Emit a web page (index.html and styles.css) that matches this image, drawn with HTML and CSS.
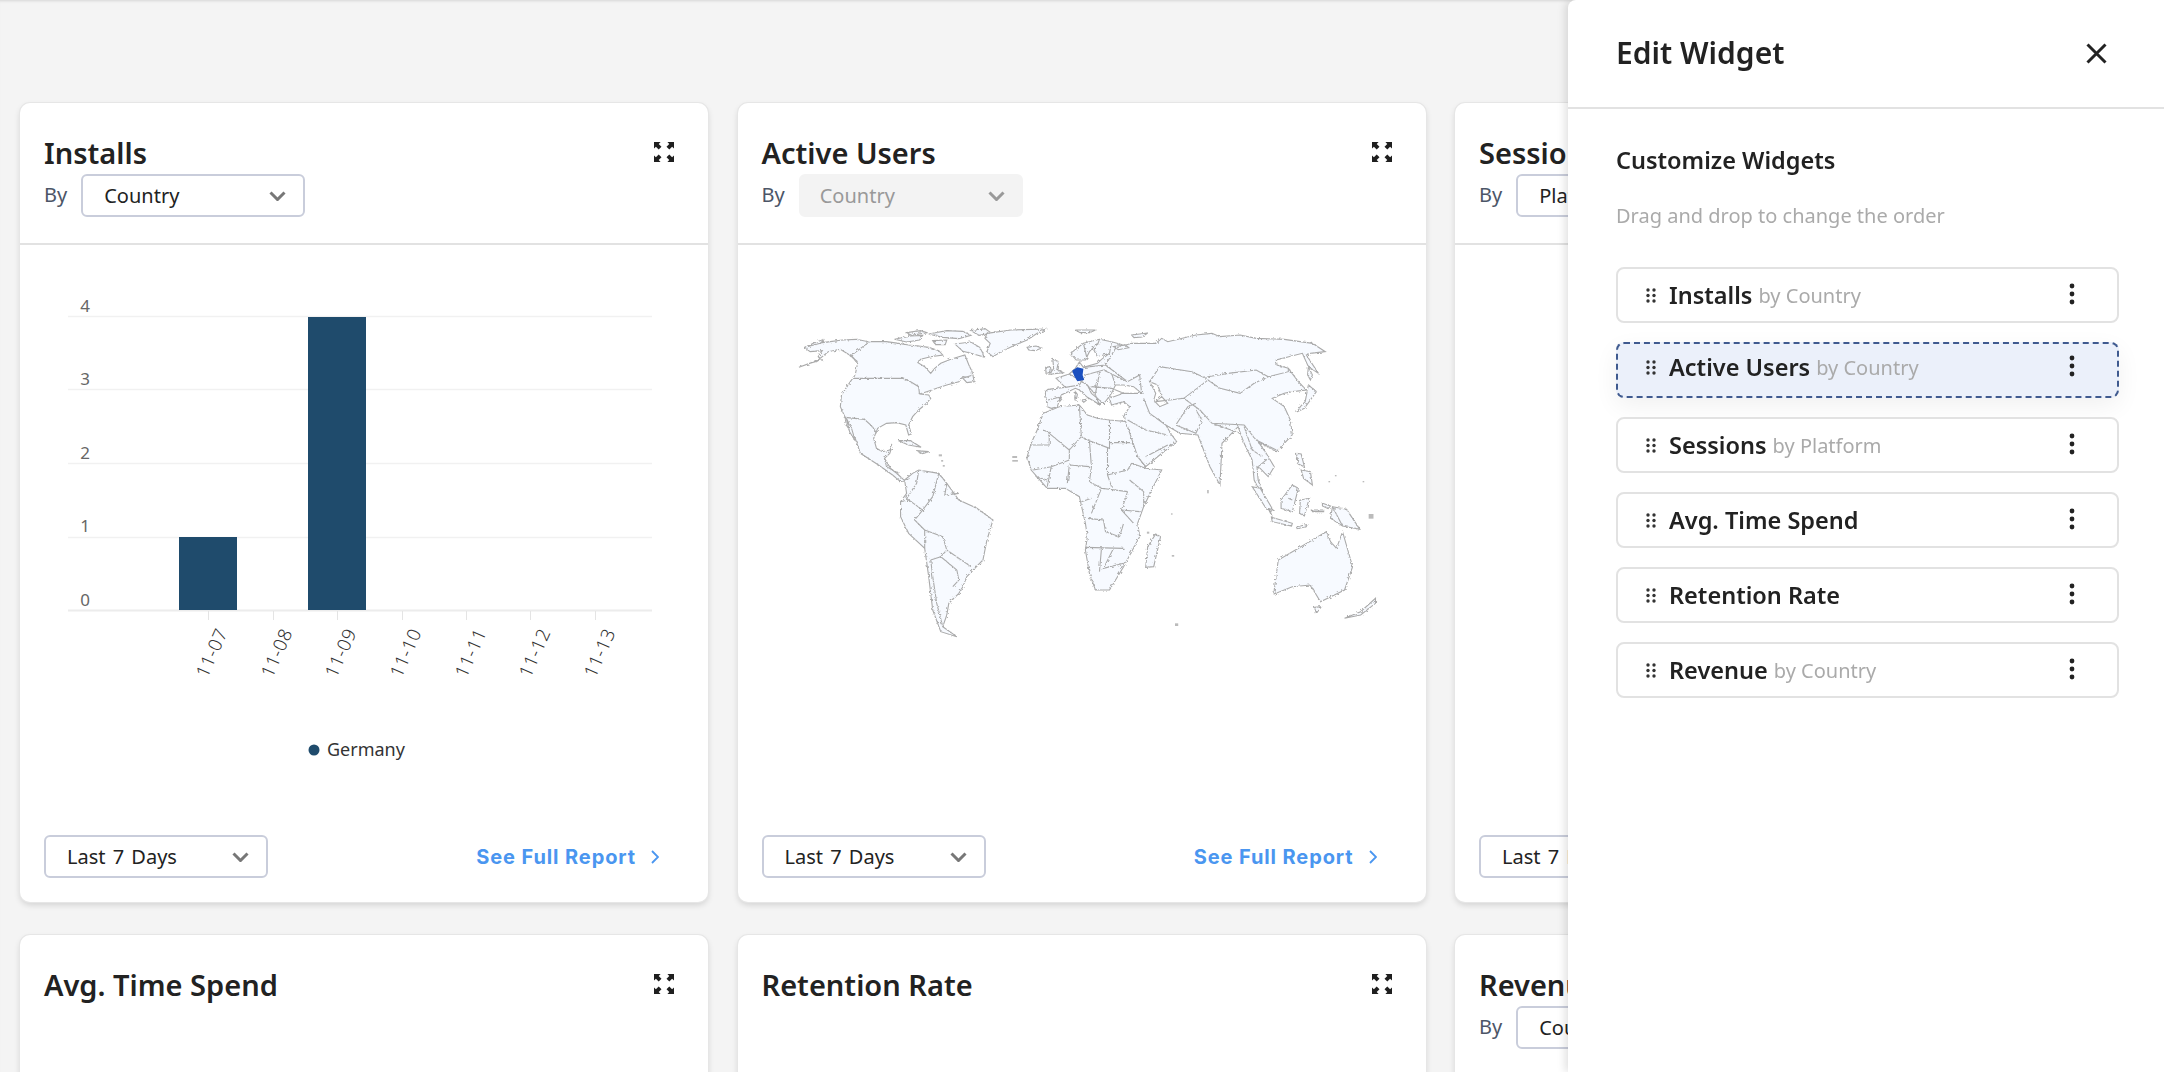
FILE: index.html
```html
<!DOCTYPE html>
<html lang="en">
<head>
    <meta charset="UTF-8">
    <title>Dashboard - Edit Widget</title>
    <link rel="stylesheet" href="styles.css">
</head>
<body>
    <svg class="sprite" aria-hidden="true">
        <symbol id="expand" viewBox="0 0 20 20">
            <path id="corner" d="M0 0h6.6L4.7 1.9 7.5 4.7 4.7 7.5 1.9 4.7 0 6.6Z"/>
            <use href="#corner" transform="matrix(-1 0 0 1 20 0)"/>
            <use href="#corner" transform="matrix(1 0 0 -1 0 20)"/>
            <use href="#corner" transform="matrix(-1 0 0 -1 20 20)"/>
        </symbol>
        <symbol id="chevron" viewBox="0 0 17 10">
            <path d="M1.5 1.5l7 7 7-7" fill="none" stroke="currentColor" stroke-width="3"/>
        </symbol>
        <symbol id="grip" viewBox="0 0 10 15">
            <circle cx="2" cy="2" r="1.7"/><circle cx="8" cy="2" r="1.7"/>
            <circle cx="2" cy="7.5" r="1.7"/><circle cx="8" cy="7.5" r="1.7"/>
            <circle cx="2" cy="13" r="1.7"/><circle cx="8" cy="13" r="1.7"/>
        </symbol>
        <symbol id="kebab" viewBox="0 0 6 22">
            <circle cx="3" cy="3" r="2.4"/><circle cx="3" cy="11" r="2.4"/><circle cx="3" cy="19" r="2.4"/>
        </symbol>
    </svg>

    <main class="grid">
        <!-- Installs -->
        <section class="card">
            <header class="card-head">
                <div class="title-row">
                    <h2>Installs</h2>
                    <svg class="expand"><use href="#expand"/></svg>
                </div>
                <div class="by-row">
                    <span class="by">By</span>
                    <div class="select"><span>Country</span><svg class="chev"><use href="#chevron"/></svg></div>
                </div>
            </header>
            <div class="card-body">
                <svg class="chart" viewBox="0 0 688 590" width="688" height="590">
                    <g class="grid-lines">
                        <path d="M48 71.5H632M48 144.5H632M48 218.5H632M48 292.5H632"/>
                        <path class="base" d="M48 365.5H632"/>
                    </g>
                    <path class="ticks" d="M188.5 366v9M253.5 366v9M317.5 366v9M382.5 366v9M446.5 366v9M510.5 366v9M575.5 366v9"/>
                    <rect class="bar" x="159" y="292" width="58" height="73"/>
                    <rect class="bar" x="288" y="72" width="58" height="293"/>
                    <g class="y-labels">
                        <text x="65" y="67">4</text>
                        <text x="65" y="140">3</text>
                        <text x="65" y="214">2</text>
                        <text x="65" y="287">1</text>
                        <text x="65" y="361">0</text>
                    </g>
                    <g class="x-labels">
                        <text transform="translate(208 387) rotate(-66)">11-07</text>
                        <text transform="translate(273 387) rotate(-66)">11-08</text>
                        <text transform="translate(337 387) rotate(-66)">11-09</text>
                        <text transform="translate(402 387) rotate(-66)">11-10</text>
                        <text transform="translate(467 387) rotate(-66)">11-11</text>
                        <text transform="translate(531 387) rotate(-66)">11-12</text>
                        <text transform="translate(596 387) rotate(-66)">11-13</text>
                    </g>
                    <circle class="legend-dot" cx="294" cy="505" r="5.5"/>
                    <text class="legend" x="307" y="511">Germany</text>
                </svg>
            </div>
            <footer class="card-foot">
                <div class="select wide"><span>Last 7 Days</span><svg class="chev"><use href="#chevron"/></svg></div>
                <a class="report">See Full Report <svg viewBox="0 0 8 14"><path d="M1 1l6 6-6 6" fill="none" stroke="currentColor" stroke-width="1.8"/></svg></a>
            </footer>
        </section>

        <!-- Active Users -->
        <section class="card">
            <header class="card-head">
                <div class="title-row">
                    <h2>Active Users</h2>
                    <svg class="expand"><use href="#expand"/></svg>
                </div>
                <div class="by-row">
                    <span class="by">By</span>
                    <div class="select disabled"><span>Country</span><svg class="chev"><use href="#chevron"/></svg></div>
                </div>
            </header>
            <div class="card-body">
                <svg class="map" viewBox="0 0 1568 1020" preserveAspectRatio="none" width="630" height="340">
                    <defs>
                        <filter id="rough" x="-2%" y="-2%" width="104%" height="104%">
                            <feTurbulence type="fractalNoise" baseFrequency="0.14" numOctaves="2" seed="4"/>
                            <feDisplacementMap in="SourceGraphic" scale="9"/>
                        </filter>
                    </defs>
                    <g filter="url(#rough)">
                        <g class="land">
                            <!-- north america -->
                            <path d="M72 172L100 160 128 150 120 140 130 122 100 125 85 112 115 100 150 95 180 90 215 88 245 95 290 95 320 100 345 105 370 108 395 112 420 122 430 135 400 140 375 148 368 158 385 170 400 190 410 175 425 160 450 148 470 140 485 135 495 165 503 185 505 205 480 200 470 215 440 225 415 235 390 245 372 252 395 255 400 265 385 285 370 300 355 320 345 345 352 372 345 375 338 345 315 338 290 340 268 355 258 385 265 415 280 425 298 420 305 405 298 430 285 445 300 475 320 495 335 512 325 515 305 495 270 465 225 430 212 385 190 345 187 322 175 290 178 255 200 215 212 195 218 160 205 140 175 118 145 125 120 150Z"/>
                            <path d="M190 325L203 355 212 392 198 365Z"/>
                            <path d="M310 88L350 78 380 76 372 90 340 96Z"/>
                            <path d="M395 72L440 62 480 64 500 76 470 86 430 82Z"/>
                            <path d="M460 102L500 96 522 112 535 142 500 130 480 124Z"/>
                            <path d="M340 68L375 62 392 68 352 76Z"/>
                            <path d="M500 62L535 56 552 70 520 76Z"/>
                            <path d="M405 92L440 90 436 104 412 104Z"/>
                            <path d="M480 205L505 195 508 215 490 218Z"/>
                            <path d="M540 70L600 60 690 57 665 70 640 90 610 105 575 125 555 140 540 125 548 100 535 85Z"/>
                            <path d="M640 112L662 108 676 114 660 122 644 120Z"/>
                            <path d="M320 392L350 392 376 412 345 405Z"/>
                            <path d="M364 422L395 425 380 431Z"/>
                            <path d="M88 112L110 98 135 88 125 100Z"/>
                            <!-- south america -->
                            <path d="M335 510L355 490 370 480 420 490 440 520 470 570 515 595 555 630 540 690 530 750 490 800 480 830 470 850 445 880 440 915 430 950 465 980 425 965 405 900 395 800 385 715 345 670 325 620 325 575 340 550Z"/>
                            <!-- africa -->
                            <path d="M650 400L665 360 680 310 720 290 770 285 790 315 815 325 845 330 890 335 905 400 935 475 975 480 950 540 930 590 915 640 920 680 880 770 845 840 810 840 795 790 785 720 790 680 785 640 770 560 735 535 690 535 650 480 640 440Z"/>
                            <path d="M960 672L972 680 955 770 935 772 940 710Z"/>
                            <!-- eurasia -->
                            <path d="M690 290L685 245 692 238 735 232 712 205 745 192 760 175 770 156 780 172 815 160 825 148 845 130 815 140 805 118 815 100 795 125 785 150 762 150 748 130 780 100 820 88 850 95 880 105 860 115 900 100 960 100 975 85 990 95 1060 75 1100 70 1120 80 1170 75 1210 85 1280 88 1350 100 1382 125 1345 130 1335 135 1365 190 1340 170 1325 130 1260 150 1262 165 1290 175 1315 215 1335 240 1300 245 1280 250 1250 265 1280 290 1295 330 1300 375 1260 425 1215 395 1235 430 1255 470 1240 500 1220 475 1212 470 1215 510 1250 620 1205 510 1200 450 1180 400 1165 350 1125 400 1120 525 1095 470 1065 375 1020 370 985 345 1000 375 1012 395 970 435 935 470 915 440 890 350 880 320 895 290 880 275 850 285 845 265 880 250 925 250 905 230 880 225 860 225 850 250 835 275 820 285 810 255 790 225 800 250 830 280 815 280 790 262 770 240 760 235 725 255 715 290 700 295Z"/>
                            <!-- islands asia pacific -->
                            <path d="M1310 430L1322 432 1330 470 1315 462Z"/>
                            <path d="M1322 480L1345 485 1350 525 1328 505Z"/>
                            <path d="M1200 530L1220 535 1252 600 1236 598Z"/>
                            <path d="M1272 570L1300 525 1315 535 1300 605 1272 595Z"/>
                            <path d="M1320 570L1342 565 1330 618 1318 610Z"/>
                            <path d="M1248 622L1300 640 1298 648 1250 635Z"/>
                            <path d="M1400 590L1435 598 1468 658 1425 648 1395 625Z"/>
                            <path d="M1350 600h28v5h-28zM1310 650l26-6v6l-24 6zM1375 580l20 8-6 8-14-8z"/>
                            <path d="M1312 305L1330 295 1360 245 1340 225 1332 275 1320 290Z"/>
                            <path d="M1340 170L1350 195 1345 210 1338 195Z"/>
                            <path d="M1255 840L1265 750 1315 715 1350 690 1385 665 1395 695 1410 715 1425 665 1450 770 1430 840 1370 875 1345 825 1300 830 1255 852Z"/>
                            <path d="M1355 892L1372 890 1360 910Z"/>
                            <path d="M1430 925L1470 905 1507 865 1507 880 1470 915Z"/>
                            <!-- europe islands -->
                            <path d="M704 148L718 155 714 178 730 188 695 193 706 176Z"/>
                            <path d="M686 172L698 170 700 186 687 190Z"/>
                            <path d="M760 245l5 8-3 18-4-2zM775 270l16-3-10 10zM720 265l6 2-4 6z"/>
                            <path d="M760 60h50l-14 8h-24zM855 110l30-5 8 8-26 6z"/>
                            <path d="M900 75l40-6-14 12-20 2z"/>
                            <!-- caspian -->
                            <path class="sea" d="M945 215L965 225 975 260 990 280 970 290 955 270 960 250Z"/>
                        </g>
                        <g class="borders">
                            <path d="M248 95L200 138 218 155M207 205L330 205 350 215 370 230 372 252M187 322L235 328 255 350 265 370M285 445L290 470 320 490"/>
                            <path d="M370 482L365 520 340 565 380 600 360 630 385 660 385 715M420 490L405 560 380 600M440 520L435 555 470 550M385 660L430 680 440 720 425 740 465 780 470 810 455 830M400 750L405 800 415 880 430 950M425 740L400 750M440 720L500 770M325 575L345 570"/>
                            <path d="M680 360L690 365 745 420 745 450M645 405L695 405 695 365M770 285L775 380 745 420M775 380L795 392 845 415 845 330M845 398L905 398M795 392L800 470 795 515M745 450L700 470 655 480M700 470L690 530M745 465L740 520M795 470L745 465M795 515L825 535 890 545M840 495L890 480 900 460M840 415L840 495 850 530M900 460L935 475M895 510L930 545 930 590M890 545L875 600 905 640M875 600L920 605M825 535L800 610M790 625L830 630 835 665 870 680M785 712L880 715M825 715L820 785M870 680L880 640M855 715L830 775 880 760M660 500L690 510M800 565L775 575"/>
                            <path d="M860 115L835 165 890 215 920 195 925 250M945 215L970 170 1050 185 1085 205 1090 200 1140 190 1210 180 1240 200 1205 220 1170 250 1120 235 1090 210 1085 215 1030 265 960 275 975 260M1240 200L1290 185 1290 175M1030 265L1070 300 1100 340 1180 345 1210 390 1260 420M930 265L945 310 985 345M1010 345L1040 290 1060 280M1010 345L1060 370 1075 330 1060 300M890 330L935 360 990 375M935 440L990 405M1100 340L1170 370M1180 350L1200 420 1225 440M1240 445L1215 470"/>
                            <path d="M745 192L790 225M785 195L830 180 890 215M780 172L835 165M800 230L850 235 880 250M820 190L810 250M850 190L860 225M735 232L770 225 785 195M692 270L720 262M780 100L790 150M820 88L815 105M850 95L845 130"/>
                            <path d="M1400 590L1425 648M1290 565L1300 570"/>
                        </g>
                    </g>
                    <path class="germany" d="M752 182L765 172 780 176 778 195 782 210 765 214 758 200Z"/>
                    <g class="specks">
                        <rect x="603" y="438" width="12" height="6"/><rect x="603" y="450" width="14" height="5"/>
                        <rect x="420" y="433" width="8" height="6"/><rect x="426" y="450" width="5" height="5"/><rect x="430" y="465" width="5" height="5"/>
                        <rect x="1088" y="540" width="4" height="10"/><rect x="998" y="610" width="4" height="4"/><rect x="1000" y="735" width="6" height="5"/>
                        <rect x="1008" y="940" width="8" height="8"/><rect x="1390" y="513" width="4" height="4"/><rect x="1406" y="495" width="4" height="4"/>
                        <rect x="1475" y="513" width="4" height="4"/><rect x="1490" y="612" width="12" height="14"/><rect x="938" y="665" width="6" height="6"/>
                    </g>
                </svg>
            </div>
            <footer class="card-foot">
                <div class="select wide"><span>Last 7 Days</span><svg class="chev"><use href="#chevron"/></svg></div>
                <a class="report">See Full Report <svg viewBox="0 0 8 14"><path d="M1 1l6 6-6 6" fill="none" stroke="currentColor" stroke-width="1.8"/></svg></a>
            </footer>
        </section>

        <!-- Sessions -->
        <section class="card">
            <header class="card-head">
                <div class="title-row">
                    <h2>Sessions</h2>
                    <svg class="expand"><use href="#expand"/></svg>
                </div>
                <div class="by-row">
                    <span class="by">By</span>
                    <div class="select"><span>Platform</span><svg class="chev"><use href="#chevron"/></svg></div>
                </div>
            </header>
            <div class="card-body"></div>
            <footer class="card-foot">
                <div class="select wide"><span>Last 7 Days</span><svg class="chev"><use href="#chevron"/></svg></div>
                <a class="report">See Full Report <svg viewBox="0 0 8 14"><path d="M1 1l6 6-6 6" fill="none" stroke="currentColor" stroke-width="1.8"/></svg></a>
            </footer>
        </section>

        <section class="card">
            <header class="card-head">
                <div class="title-row">
                    <h2>Avg. Time Spend</h2>
                    <svg class="expand"><use href="#expand"/></svg>
                </div>
            </header>
        </section>

        <section class="card">
            <header class="card-head">
                <div class="title-row">
                    <h2>Retention Rate</h2>
                    <svg class="expand"><use href="#expand"/></svg>
                </div>
            </header>
        </section>

        <section class="card">
            <header class="card-head">
                <div class="title-row">
                    <h2>Revenue</h2>
                    <svg class="expand"><use href="#expand"/></svg>
                </div>
                <div class="by-row">
                    <span class="by">By</span>
                    <div class="select"><span>Country</span><svg class="chev"><use href="#chevron"/></svg></div>
                </div>
            </header>
        </section>
    </main>

    <!-- Side panel -->
    <aside class="panel">
        <div class="panel-head">
            <h1>Edit Widget</h1>
            <svg class="close" viewBox="0 0 21 21"><path d="M1.5 1.5l18 18M19.5 1.5l-18 18" fill="none" stroke="currentColor" stroke-width="3"/></svg>
        </div>
        <div class="panel-body">
            <h3>Customize Widgets</h3>
            <p class="hint">Drag and drop to change the order</p>
            <ul class="widget-list">
                <li class="widget-row">
                    <svg class="grip"><use href="#grip"/></svg>
                    <b>Installs</b><span class="sub">by Country</span>
                    <svg class="kebab"><use href="#kebab"/></svg>
                </li>
                <li class="widget-row dragging">
                    <svg class="grip"><use href="#grip"/></svg>
                    <b>Active Users</b><span class="sub">by Country</span>
                    <svg class="kebab"><use href="#kebab"/></svg>
                </li>
                <li class="widget-row">
                    <svg class="grip"><use href="#grip"/></svg>
                    <b>Sessions</b><span class="sub">by Platform</span>
                    <svg class="kebab"><use href="#kebab"/></svg>
                </li>
                <li class="widget-row">
                    <svg class="grip"><use href="#grip"/></svg>
                    <b>Avg. Time Spend</b>
                    <svg class="kebab"><use href="#kebab"/></svg>
                </li>
                <li class="widget-row">
                    <svg class="grip"><use href="#grip"/></svg>
                    <b>Retention Rate</b>
                    <svg class="kebab"><use href="#kebab"/></svg>
                </li>
                <li class="widget-row">
                    <svg class="grip"><use href="#grip"/></svg>
                    <b>Revenue</b><span class="sub">by Country</span>
                    <svg class="kebab"><use href="#kebab"/></svg>
                </li>
            </ul>
        </div>
    </aside>
</body>
</html>
```
FILE: styles.css
```css
/* Page */
html, body {
    height: 100%;
}

body {
    margin: 0;
    overflow: hidden;
    background: #f4f4f4;
    color: #222;
    font-family: 'Noto Sans', sans-serif;
    box-shadow: inset 0 3px 3px -2px rgba(0, 0, 0, 0.12);
}

.sprite {
    display: none;
}

.grid {
    display: grid;
    grid-template-columns: repeat(3, 688px);
    grid-auto-rows: 799px;
    column-gap: 29.5px;
    row-gap: 33px;
    padding: 103px 20px 0;
    width: 2200px;
    height: 969px;
    overflow: hidden;
}

/* Cards */
.card {
    display: flex;
    flex-direction: column;
    background: #fff;
    border-radius: 10px;
    box-shadow: 0 0 0 1px #e6e6e6, 0 3px 6px rgba(0, 0, 0, 0.14);
}

.card-head {
    box-sizing: border-box;
    height: 142px;
    padding: 31px 34px 0 24px;
    border-bottom: 2px solid #e2e2e2;
}

.title-row {
    display: flex;
    justify-content: space-between;
    align-items: flex-start;
}

h2 {
    margin: 0;
    font-size: 29px;
    line-height: 38px;
    font-weight: 600;
    color: #222;
}

.expand {
    width: 20px;
    height: 20px;
    margin-top: 8px;
    fill: #1f1f1f;
}

.by-row {
    display: flex;
    align-items: center;
    gap: 14px;
    margin-top: 2px;
}

.by {
    margin-top: -2px;
    font-size: 20px;
    color: #4c5567;
}

/* Selects */
.select {
    box-sizing: border-box;
    display: flex;
    align-items: center;
    justify-content: space-between;
    width: 224px;
    height: 43px;
    padding: 0 17px 0 21px;
    border: 2px solid #c9cddb;
    border-radius: 6px;
    background: #fff;
    font-size: 20px;
    word-spacing: 2px;
    color: #222;
}

.select.wide {
    width: 224px;
}

.select.disabled {
    padding: 0 16px 0 19px;
    border-color: #f3f3f3;
    background: #f3f3f3;
    color: #999;
}

.chev {
    width: 17px;
    height: 10px;
    color: #777;
}

.disabled .chev {
    color: #999;
}

.card-body {
    flex: 1;
    min-height: 0;
}

.card-foot {
    display: flex;
    justify-content: space-between;
    align-items: center;
    padding: 0 49px 24px 24px;
}

.report {
    display: flex;
    align-items: center;
    gap: 15px;
    font-family: 'Inter', sans-serif;
    font-size: 20px;
    font-weight: 700;
    letter-spacing: 0.9px;
    color: #4a96f0;
}

.report svg {
    width: 8px;
    height: 14px;
}

/* Bar chart */
.chart, .map {
    display: block;
}

.grid-lines path {
    fill: none;
    stroke: #f1f1f1;
    stroke-width: 1.5;
}

.grid-lines .base {
    stroke: #ececec;
    stroke-width: 2;
}

.ticks {
    stroke: #e4e4e4;
    stroke-width: 1;
}

.bar {
    fill: #1f4b6c;
}

.y-labels text {
    font-size: 17px;
    fill: #666;
    text-anchor: middle;
}

.x-labels text {
    font-size: 18.5px;
    font-weight: 300;
    letter-spacing: 0.6px;
    fill: #333;
    text-anchor: end;
}

.legend-dot {
    fill: #1f4b6c;
}

.legend {
    font-size: 18px;
    fill: #333;
}

/* Map */
.map {
    margin: 65px 0 0 32px;
}

.land path {
    fill: #f7faff;
    stroke: #aaa;
    stroke-width: 1.1;
    vector-effect: non-scaling-stroke;
}

.land .sea {
    fill: #fff;
}

.borders path {
    fill: none;
    stroke: #aaa;
    stroke-width: 1.1;
    vector-effect: non-scaling-stroke;
}

.germany {
    fill: #1a4fbf;
}

.specks rect {
    fill: #bbb;
}

/* Edit panel */
.panel {
    position: fixed;
    top: 0;
    right: 0;
    bottom: 0;
    width: 596px;
    background: #fff;
    box-shadow: -3px 0 8px rgba(0, 0, 0, 0.12);
    border-top-left-radius: 8px;
}

.panel-head {
    box-sizing: border-box;
    display: flex;
    justify-content: space-between;
    align-items: center;
    height: 109px;
    padding: 0 57px 3px 48px;
    border-bottom: 2px solid #e2e2e2;
}

h1 {
    margin: 0;
    font-size: 30px;
    font-weight: 600;
    color: #222;
}

.close {
    width: 21px;
    height: 21px;
    margin-top: 2px;
    color: #222;
}

.panel-body {
    padding: 35px 45px 0 48px;
}

h3 {
    margin: 0;
    font-size: 23.5px;
    line-height: 32px;
    font-weight: 600;
}

.hint {
    margin: 26px 0 0;
    font-size: 20px;
    line-height: 28px;
    color: #aaa;
}

.widget-list {
    list-style: none;
    margin: 37px 0 0;
    padding: 0;
    display: flex;
    flex-direction: column;
    gap: 19px;
}

.widget-row {
    box-sizing: border-box;
    display: flex;
    align-items: center;
    height: 56px;
    padding: 0 42px 0 28px;
    border: 2px solid #e2e2e2;
    border-radius: 8px;
    background: #fff;
}

.widget-row.dragging {
    padding-bottom: 6px;
    border: 2px dashed #3f5a8f;
    background: #ebf0fa;
    box-shadow: 0 8px 24px rgba(0, 0, 0, 0.06);
}

.grip {
    width: 10px;
    height: 15px;
    margin-right: 13px;
    fill: #333;
}

.widget-row b {
    font-size: 23.5px;
    font-weight: 600;
    color: #222;
}

.sub {
    margin-left: 6px;
    font-size: 20px;
    color: #aaa;
}

.kebab {
    width: 6px;
    height: 22px;
    margin: -3px 0 0 auto;
    fill: #222;
}
```
